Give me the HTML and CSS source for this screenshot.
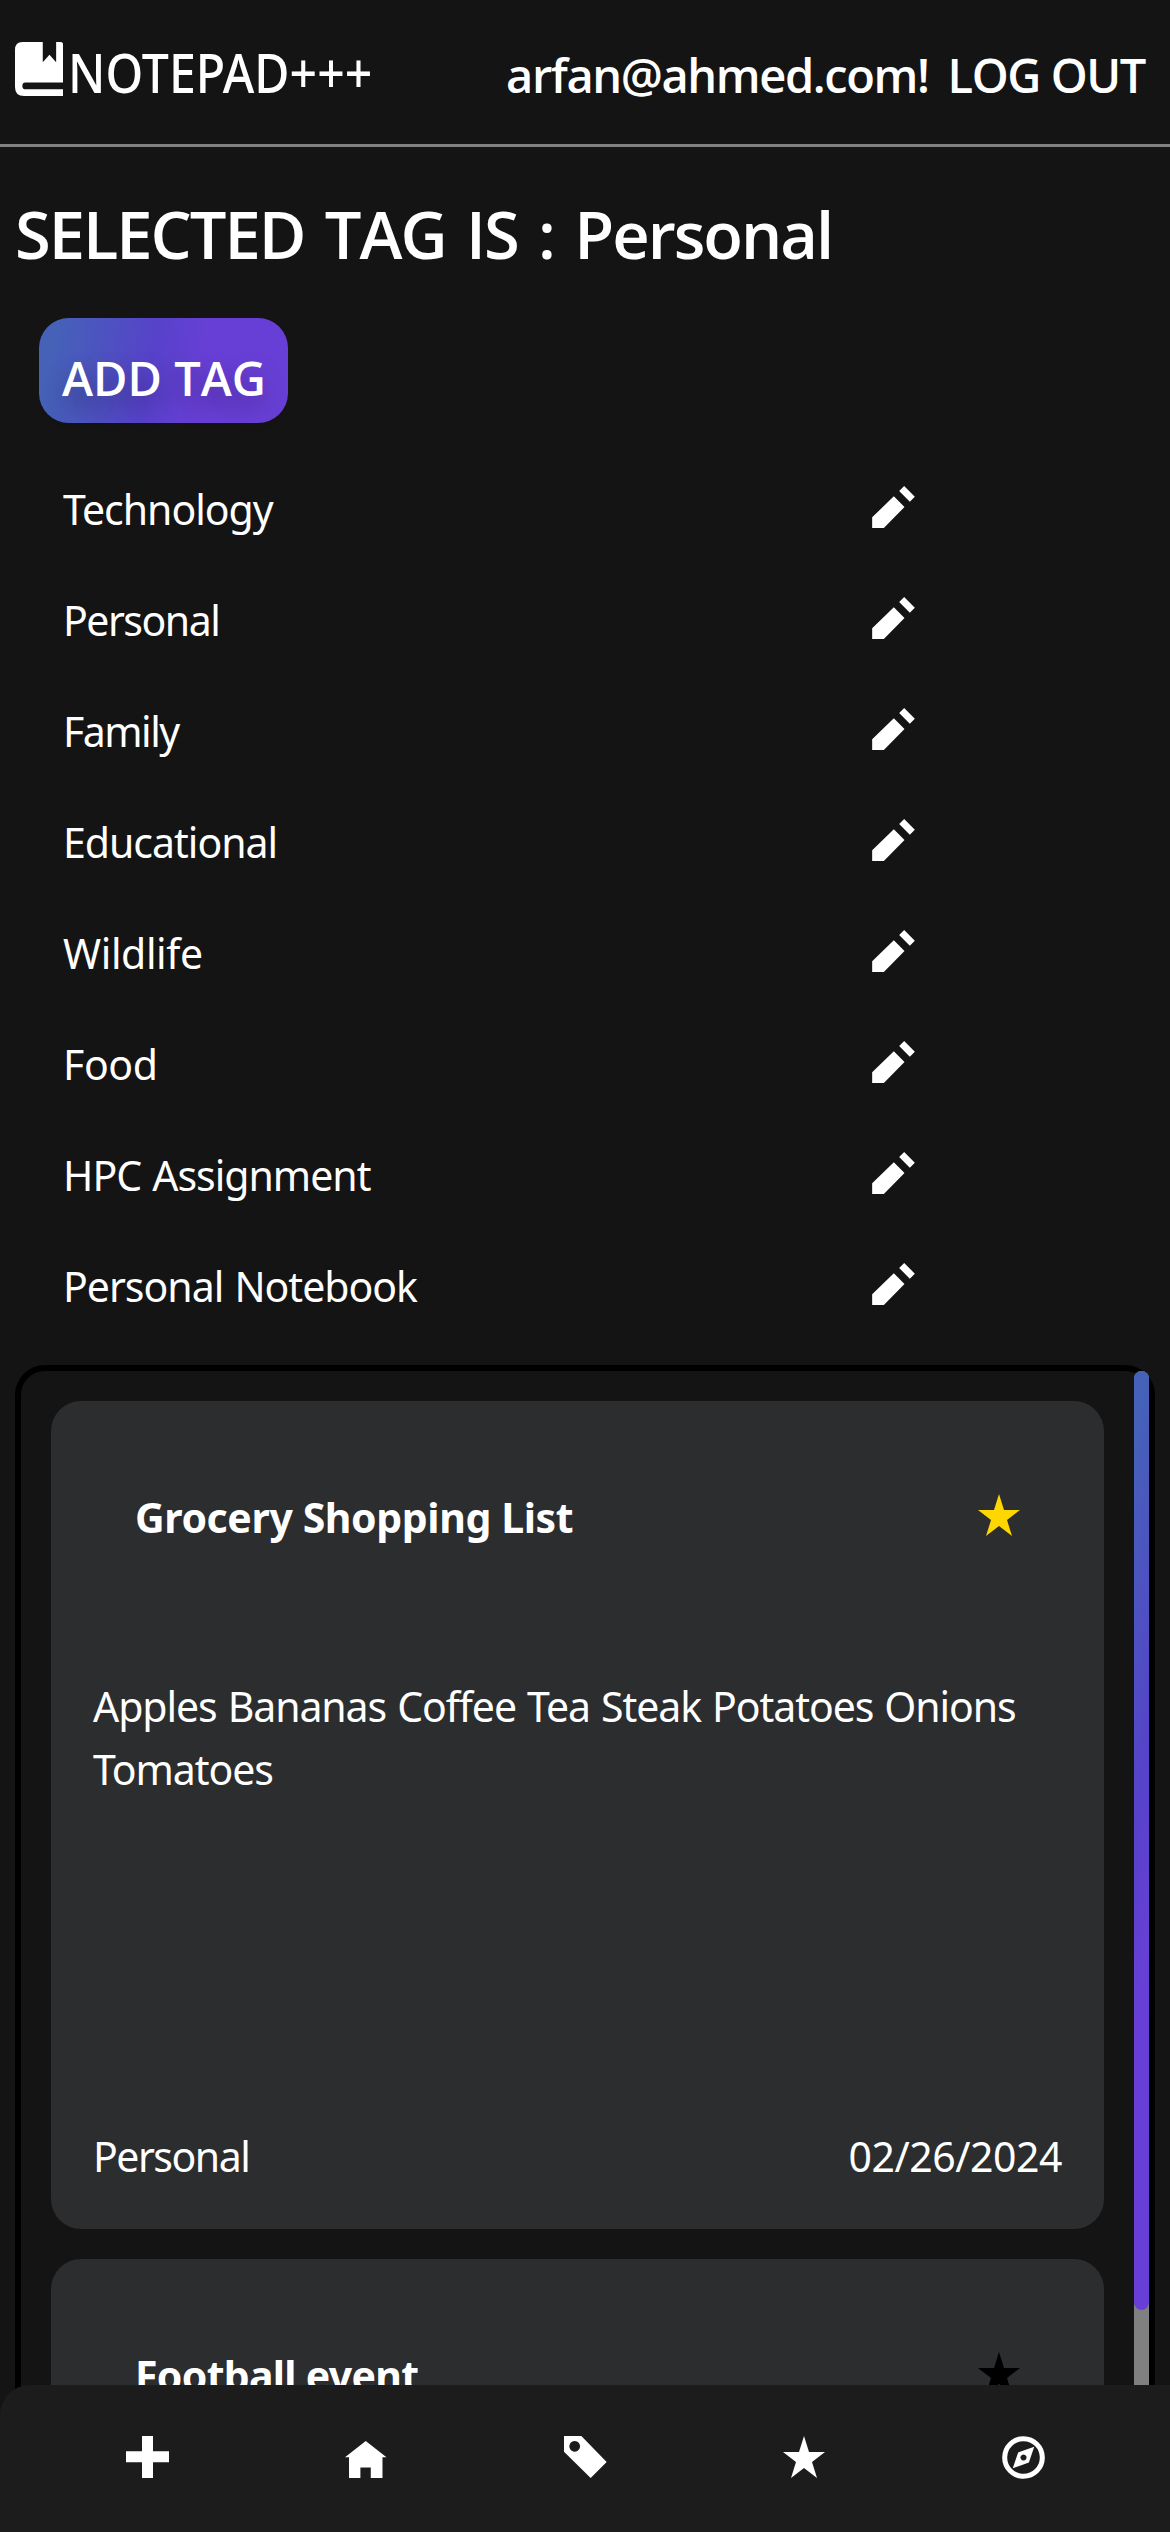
FILE: index.html
```html
<!DOCTYPE html>
<html lang="en">
<head>
<meta charset="utf-8">
<title>NOTEPAD+++</title>
<link rel="stylesheet" href="styles.css">
</head>
<body>
<svg class="sprite" aria-hidden="true">
  <symbol id="pencil" viewBox="0 0 128 126"><path d="M96 0l32 32-15 15-32-32zM65 31l32 32-62 63H0V94z"/></symbol>
  <symbol id="star" viewBox="0 0 126 126"><path d="M63 0l15 48h48L87 78l15 48-39-30-39 30 15-48L0 48h48z"/></symbol>
</svg>

<header class="header">
  <a class="logo">
    <svg class="logo-icon" viewBox="0 0 145 161"><path d="M22 0H83V60L103 38L123 60V0H135Q145 0 145 11V121H31Q22 121 22 131T31 141H145V161H27Q0 161 0 134V24Q0 0 22 0Z"/></svg>
    <span class="logo-text">NOTEPAD+++</span>
  </a>
  <div class="account"><span>arfan@ahmed.com!</span><a>LOG OUT</a></div>
</header>

<h1 class="heading">SELECTED TAG IS : Personal</h1>
<button class="add-tag">ADD TAG</button>

<ul class="tags">
  <li class="tag"><span>Technology</span><svg class="edit"><use href="#pencil"/></svg></li>
  <li class="tag"><span class="tight">Personal</span><svg class="edit"><use href="#pencil"/></svg></li>
  <li class="tag"><span class="tight">Family</span><svg class="edit"><use href="#pencil"/></svg></li>
  <li class="tag"><span>Educational</span><svg class="edit"><use href="#pencil"/></svg></li>
  <li class="tag"><span class="loose">Wildlife</span><svg class="edit"><use href="#pencil"/></svg></li>
  <li class="tag"><span class="loose">Food</span><svg class="edit"><use href="#pencil"/></svg></li>
  <li class="tag"><span>HPC Assignment</span><svg class="edit"><use href="#pencil"/></svg></li>
  <li class="tag"><span>Personal Notebook</span><svg class="edit"><use href="#pencil"/></svg></li>
</ul>

<main class="notes">
  <div class="note-list">
    <article class="note">
      <div class="note-head"><h2>Grocery Shopping List</h2><svg class="star favourite"><use href="#star"/></svg></div>
      <p class="note-body">Apples Bananas Coffee Tea Steak Potatoes Onions Tomatoes</p>
      <footer class="note-foot"><span class="tight">Personal</span><time>02/26/2024</time></footer>
    </article>
    <article class="note">
      <div class="note-head"><h2 class="tight-title">Football event</h2><svg class="star"><use href="#star"/></svg></div>
    </article>
  </div>
  <div class="track"><div class="thumb"></div></div>
</main>

<nav class="nav">
  <a><svg width="43" height="42" viewBox="0 0 129 126"><path d="M48 0H81V46H129V79H81V126H48V79H0V46H48Z"/></svg></a>
  <a><svg class="home" width="41.5" height="37" viewBox="0 0 124 110"><path d="M62 0L124 48H112V110H77V79H46V110H12V48H0Z"/></svg></a>
  <a><svg width="43" height="42" viewBox="0 0 129 126"><path fill-rule="evenodd" d="M0 0H52L128 78L80 126L0 47ZM32 15a16 16 0 1 0 .1 0Z"/></svg></a>
  <a><svg width="42" height="42"><use href="#star"/></svg></a>
  <a><svg width="43" height="43" viewBox="-64 -64 128 128"><circle class="ring" r="56"/><path fill-rule="evenodd" d="M32-32L16 15L-32 32L-16-15ZM0-9a9 9 0 1 0 .1 0Z"/></svg></a>
</nav>
</body>
</html>
```
FILE: styles.css
```css
* { box-sizing: border-box; margin: 0; padding: 0; }

body {
  height: 2532px;
  overflow: hidden;
  background: #141414;
  color: #fff;
  font: 41px/63px "Noto Sans", sans-serif;
  letter-spacing: -1px;
  word-spacing: 1.5px;
}

svg { display: block; fill: #fff; }
.sprite { position: absolute; width: 0; height: 0; }
.tight { letter-spacing: -1.5px; }
.loose { letter-spacing: -0.4px; }

.header {
  display: flex;
  justify-content: space-between;
  align-items: center;
  height: 147px;
  padding: 0 25px 0 14.5px;
  border-bottom: 3px solid #808080;
}
.logo { display: flex; align-items: center; gap: 5px; width: 400px; }
.logo-icon { width: 48.5px; height: 54px; margin-bottom: 6px; }
.logo-text {
  font-size: 54px;
  font-weight: 500;
  letter-spacing: 0;
  transform: scaleX(0.893);
  transform-origin: left;
}
.account {
  display: flex;
  gap: 19px;
  padding-top: 6px;
  font: 600 47px/64px "Open Sans", sans-serif;
  letter-spacing: -1.4px;
  word-spacing: 0;
}

.heading {
  margin: 42px 15px 39px;
  font: 600 65px/90px "Open Sans", sans-serif;
  letter-spacing: -2px;
  word-spacing: 5.5px;
}

.add-tag {
  display: block;
  width: 249px;
  height: 105px;
  margin-left: 39px;
  padding: 15px 0 0 1px;
  border: 0;
  border-radius: 30px;
  background: linear-gradient(100deg, #4561b8 8%, #5742ca 45%, #683fd6 65%);
  color: #fff;
  font: 600 47px/64px "Open Sans", sans-serif;
  text-shadow: 0 12px 24px rgba(0, 0, 0, 0.3);
}

.tags { margin: 30px 0 24px; list-style: none; }
.tag { display: flex; align-items: center; height: 111px; padding-left: 63px; }
.tag span { width: 809px; padding-top: 2px; }
.edit { width: 43px; height: 42px; margin-bottom: 3px; }

.notes {
  display: flex;
  height: 1167px;
  margin: 0 15px;
  border: 6px solid #000;
  border-radius: 30px;
}
.note-list {
  flex: 1;
  display: flex;
  flex-direction: column;
  gap: 30px;
  padding: 30px;
  overflow: hidden;
}
.note {
  display: flex;
  flex-direction: column;
  flex: none;
  height: 828px;
  padding: 42px 42px 41px;
  border-radius: 30px;
  background: #2c2d2f;
}
.note-head {
  display: flex;
  justify-content: space-between;
  align-items: center;
  height: 232px;
  padding: 42px 42px 127px;
}
.note-head h2 { padding-top: 1px; font-size: 41px; line-height: 62px; letter-spacing: -0.4px; word-spacing: 0; }
.note-head .tight-title { letter-spacing: -0.7px; }
.star { width: 42px; height: 42px; margin-bottom: 3px; fill: #000; }
.favourite { fill: #ffd700; }
.note-body { flex: 1; letter-spacing: -1.07px; }
.note-foot { display: flex; justify-content: space-between; }
.note-foot time { letter-spacing: -0.45px; }

.track { width: 15px; border-radius: 8px; background: #808080; }
.thumb {
  height: 939px;
  border-radius: 8px;
  background: linear-gradient(100deg, #4561b8 8%, #5742ca 45%, #683fd6 65%);
}

.nav {
  position: fixed;
  left: 0;
  right: 0;
  bottom: 0;
  display: flex;
  height: 147px;
  padding: 0 37.5px 3px;
  border-top-left-radius: 30px;
  background: #1c1c1c;
}
.nav a { flex: 1; display: flex; justify-content: center; align-items: center; }
.home { margin-top: 5px; }
.ring { fill: none; stroke: #fff; stroke-width: 15; }
```
